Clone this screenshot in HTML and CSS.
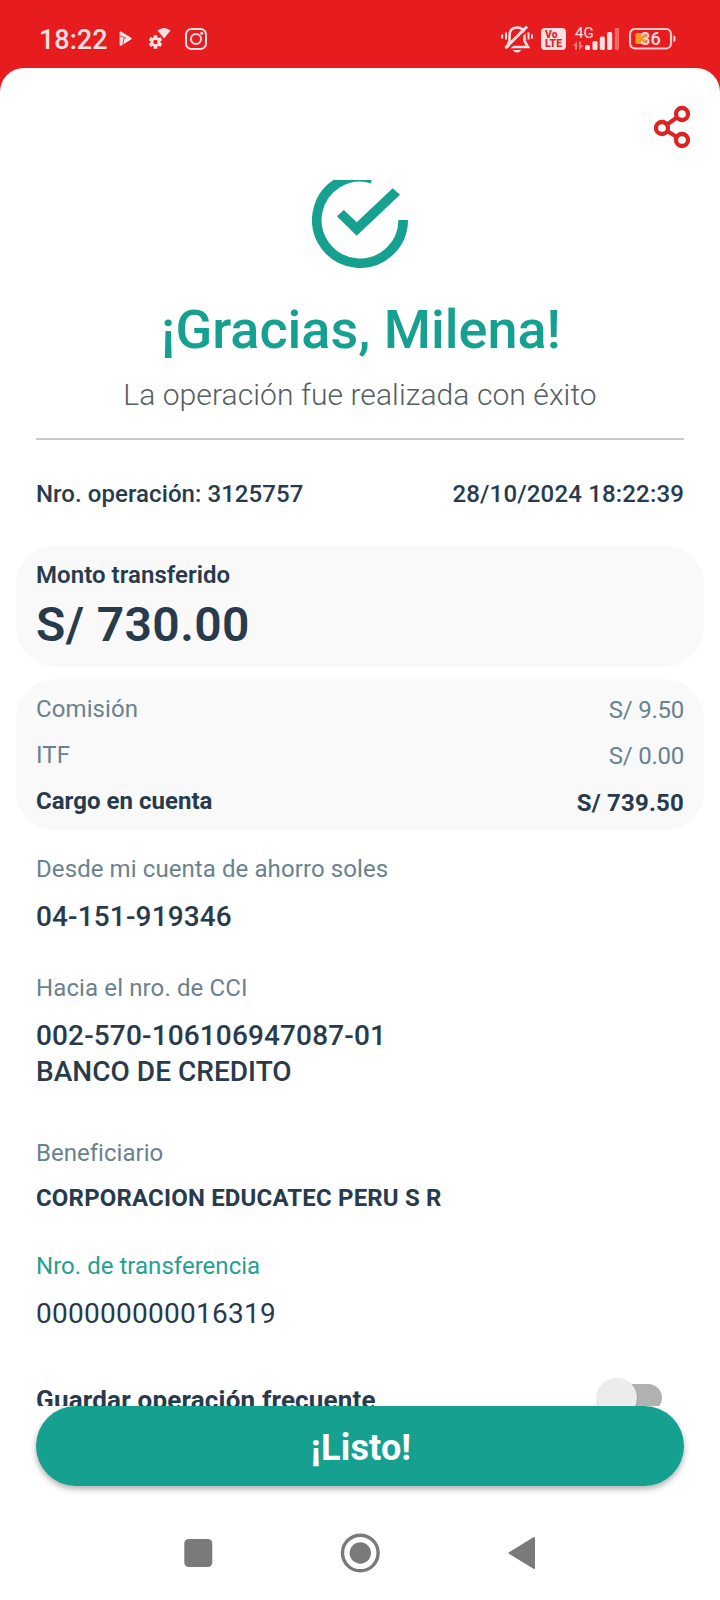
FILE: index.html
```html
<!DOCTYPE html>
<html lang="es">
<head>
<meta charset="utf-8">
<title>Operación realizada</title>
<link rel="stylesheet" href="styles.css">
</head>
<body>
<header class="status">
  <span class="clock">18:22</span>
  <svg class="i-play" width="14" height="16" viewBox="0 0 14 16"><path d="M1.800 1.800 11.500 7.500 1.800 13.500Z" fill="#fde0e1" stroke="#fde0e1" stroke-width="2.400" stroke-linejoin="round"/><path d="M0 4.500 7 7.200M5 7 3.800 13.500" fill="none" stroke="#e61c1f" stroke-width=".8"/></svg>
  <svg class="i-gear" width="24" height="24" viewBox="0 0 24 24"><path d="M9.500 3.500Q16-1.500 22.500 3.500L16 11.500Z" fill="#fde0e1"/><g stroke="#fde0e1" stroke-width="3.600"><path d="M7.500 8.300v13.400M1.700 11.650l11.600 6.700M1.700 18.350l11.600-6.700"/></g><circle cx="7.500" cy="15" r="5" fill="#fde0e1"/><circle cx="7.500" cy="15" r="2.200" fill="#e61c1f"/></svg>
  <svg class="i-insta" width="22" height="22" viewBox="0 0 22 22" fill="none" stroke="#fde0e1"><rect x="1" y="1" width="20" height="20" rx="5.500" stroke-width="2"/><circle cx="11" cy="11" r="5" stroke-width="2"/><circle cx="16.700" cy="5.300" r="1.500" fill="#fde0e1" stroke="none"/></svg>
  <span class="spacer"></span>
  <svg class="i-bell" width="32" height="30" viewBox="0 0 32 30" fill="none" stroke="#fde0e1"><path d="M8.500 17V12Q8.500 3.500 16 3.500Q23.500 3.500 23.500 12V17L27 23H6L8.500 17" stroke-width="2.600"/><path d="M11.500 26Q16 31 20.500 26Z" fill="#fde0e1" stroke="none"/><path d="M7 25.500 28 4.500" stroke="#e61c1f" stroke-width="2.200"/><path d="M4.500 24 26 2.500" stroke-width="3"/><path d="M5 8.500v7M1.200 10.500v4M27.500 8.500v7M31 10.500v4" stroke-width="2"/></svg>
  <svg class="i-volte" width="25" height="22" viewBox="0 0 25 22"><rect width="25" height="22" rx="4" fill="#fde0e1"/><text class="tiny" x="4" y="10" textLength="12.500" lengthAdjust="spacingAndGlyphs">Vo</text><text class="tiny" x="4" y="19" textLength="17" lengthAdjust="spacingAndGlyphs">LTE</text></svg>
  <svg class="i-signal" width="48" height="28" viewBox="0 0 48 28"><text class="net" x="3" y="12.500">4G</text><g fill="#f47d80"><path d="M3 25V21H.500L5 16.500V25ZM7 16.500V25L11.500 20.500H9V16.500Z"/></g><g fill="#fde0e1"><rect x="13" y="20" width="5" height="5" rx="1.500"/><rect x="20.500" y="16" width="5" height="9" rx="1.500"/><rect x="27.800" y="11.500" width="5" height="13.500" rx="1.500"/><rect x="35.200" y="7" width="5" height="18" rx="1.500"/></g><rect x="42.800" y="3" width="4.200" height="22" rx="1" fill="#f2666a"/></svg>
  <svg class="i-battery" width="47" height="22" viewBox="0 0 47 22"><rect x="1" y="1" width="41" height="19.500" rx="5" fill="none" stroke="#fcc9ca" stroke-width="2.200"/><rect x="6.500" y="5" width="11" height="11" rx="1.500" fill="#f29a26"/><path d="M44.500 7.500q2 0 2 3.200t-2 3.200Z" fill="#fde0e1"/><text class="level" x="11.300" y="17">36</text></svg>
</header>
<main class="sheet">
  <div class="toolbar">
    <svg width="38" height="44" viewBox="0 0 38 44" fill="none" stroke="#dc2424" stroke-width="4.300"><path d="M8 23 28 9M8 23 28 35" stroke-width="4"/><circle cx="28" cy="9" r="6" fill="#fff"/><circle cx="8" cy="23" r="6" fill="#fff"/><circle cx="28" cy="35" r="6" fill="#fff"/></svg>
  </div>
  <section class="scroll">
    <svg class="done" width="96" height="88" viewBox="0 0 96 88"><path d="M91.200 40A43.200 43.200 0 1 1 60.200-1.450" fill="none" stroke="#16a08f" stroke-width="9.600"/><path d="M25 36.300 31.800 30 44.700 42.300 80.700 8.300 88 14.700 44.700 55.700Z" fill="#16a08f"/></svg>
    <h1 class="title">¡Gracias, Milena!</h1>
    <p class="subtitle">La operación fue realizada con éxito</p>
    <hr class="rule">
    <div class="row meta"><span>Nro. operación: 3125757</span><span class="stamp">28/10/2024 18:22:39</span></div>
    <div class="card amount">
      <div class="amount-label">Monto transferido</div>
      <div class="amount-value">S/ 730.00</div>
    </div>
    <div class="card fees">
      <div class="row fee"><span>Comisión</span><span class="value">S/ 9.50</span></div>
      <div class="row fee"><span>ITF</span><span class="value">S/ 0.00</span></div>
      <div class="row fee total"><span>Cargo en cuenta</span><span class="value">S/ 739.50</span></div>
    </div>
    <div class="field from"><div class="label">Desde mi cuenta de ahorro soles</div><div class="data">04-151-919346</div></div>
    <div class="field to"><div class="label wide">Hacia el nro. de CCI</div><div class="data">002-570-106106947087-01</div><div class="data bank">BANCO DE CREDITO</div></div>
    <div class="field payee"><div class="label plain">Beneficiario</div><div class="name">CORPORACION EDUCATEC PERU S R</div></div>
    <div class="field transfer"><div class="label green">Nro. de transferencia</div><div class="data light">000000000016319</div></div>
    <div class="row save"><span>Guardar operación frecuente</span><span class="switch"><span class="thumb"></span></span></div>
  </section>
  <button class="ok" type="button">¡Listo!</button>
</main>
<nav class="nav">
  <svg width="352" height="40" viewBox="0 0 352 40" fill="#7a7a7a"><rect x=".300" y="6" width="28" height="28" rx="4.500"/><circle cx="176.300" cy="20" r="17.800" fill="none" stroke="#7a7a7a" stroke-width="3.400"/><circle cx="176.300" cy="20" r="10.700"/><path d="M325.500 20 350 5V35Z" stroke="#7a7a7a" stroke-width="2" stroke-linejoin="round"/></svg>
</nav>
</body>
</html>
```
FILE: styles.css
```css
* { box-sizing: border-box; margin: 0; padding: 0; }
body { width: 720px; height: 1600px; overflow: hidden; background: #e61c1f; color: #283b4d; font-family: Roboto, "Liberation Sans", sans-serif; display: flex; flex-direction: column; }
svg { display: block; flex: none; }
.status { height: 68px; padding: 0 44px 0 39px; display: flex; align-items: flex-start; flex: none; }
.clock { width: 79px; margin-top: 24px; font-size: 27px; line-height: 32px; font-weight: 500; color: #fde0e1; }
.i-play { margin: 31px 0 0 1px; }
.i-gear { margin: 27px 0 0 15px; }
.i-insta { margin: 28px 0 0 13px; }
.spacer { flex: 1; }
.i-bell { margin-top: 24px; }
.i-volte { margin: 28px 0 0 8px; }
.i-signal { margin: 25px 0 0 6px; overflow: visible; }
.i-battery { margin: 28px 0 0 9px; }
.tiny { font-size: 10px; font-weight: 900; fill: #dc2a2d; }
.net { font-size: 15px; fill: #fde0e1; }
.level { font-size: 18px; font-weight: 500; fill: #fde0e1; }
.sheet { height: 1440px; flex: none; background: #fff; border-radius: 24px 24px 0 0; }
.toolbar { height: 112px; padding: 37px 28px 0 0; display: flex; justify-content: flex-end; align-items: flex-start; }
.scroll { height: 1226px; overflow: hidden; padding: 0 16px; }
.done { margin: 0 auto; }
.title { margin-top: 30px; padding-left: 2px; text-align: center; font-size: 54px; line-height: 64px; font-weight: 500; color: #16a08f; }
.subtitle { margin-top: 15px; text-align: center; font-size: 30px; line-height: 35px; font-weight: 300; letter-spacing: .08px; color: #555e63; }
.rule { height: 2px; margin: 26px 20px 0; border: 0; background: #c9c9c9; }
.row { display: flex; justify-content: space-between; font-size: 24px; line-height: 28px; }
.meta { margin: 40px 20px 0; font-weight: 500; letter-spacing: .07px; }
.stamp { letter-spacing: .17px; }
.card { background: #f9f9f9; border-radius: 40px; padding: 16px 20px; }
.amount { height: 122px; margin-top: 37px; }
.amount-label { font-size: 24px; line-height: 28px; font-weight: 600; letter-spacing: .05px; }
.amount-value { margin-top: 7px; font-size: 48px; line-height: 57px; font-weight: 600; letter-spacing: .4px; }
.fees { height: 152px; margin-top: 12px; display: flex; flex-direction: column; gap: 18px; }
.fee { color: #6a828e; letter-spacing: .1px; }
.fee .value { padding-top: 1px; height: 28px; letter-spacing: -.25px; }
.total { color: #283b4d; font-weight: 700; letter-spacing: .03px; }
.total .value { padding-top: 2px; letter-spacing: .2px; }
.field { margin-left: 20px; }
.from { margin-top: 24px; }
.to { margin-top: 41px; }
.payee { margin-top: 51px; }
.transfer { margin-top: 40px; }
.label { font-size: 24px; line-height: 28px; letter-spacing: .09px; color: #6a828e; }
.wide { letter-spacing: .12px; }
.plain { letter-spacing: .02px; font-variant-ligatures: common-ligatures; }
.green { color: #26a08f; letter-spacing: .03px; }
.data { margin-top: 17px; font-size: 28px; line-height: 33px; font-weight: 500; letter-spacing: .14px; }
.bank { margin-top: 3px; letter-spacing: .03px; }
.light { font-weight: 400; letter-spacing: .27px; }
.name { margin-top: 17px; font-size: 24px; line-height: 28px; font-weight: 700; letter-spacing: .17px; }
.save { margin: 47px 42px 0 20px; font-size: 26px; line-height: 46px; font-weight: 700; letter-spacing: .19px; }
.switch { position: relative; width: 60px; height: 28px; margin-top: 7px; border-radius: 14px; background: #b1b1b1; }
.thumb { position: absolute; left: -5px; top: -6px; width: 40px; height: 40px; border-radius: 50%; background: #ececec; box-shadow: 0 1px 2px rgba(0,0,0,.25); }
.ok { display: block; width: 648px; height: 80px; margin: 0 auto; padding: 4px 0 0 2px; border: 0; border-radius: 40px; background: #16a08f; box-shadow: 0 3px 6px rgba(0,0,0,.32); color: #fff; font-family: inherit; font-size: 36px; line-height: 42px; font-weight: 700; letter-spacing: .15px; }
.nav { height: 92px; flex: none; display: flex; justify-content: center; padding-top: 25px; background: #fff; }
```
